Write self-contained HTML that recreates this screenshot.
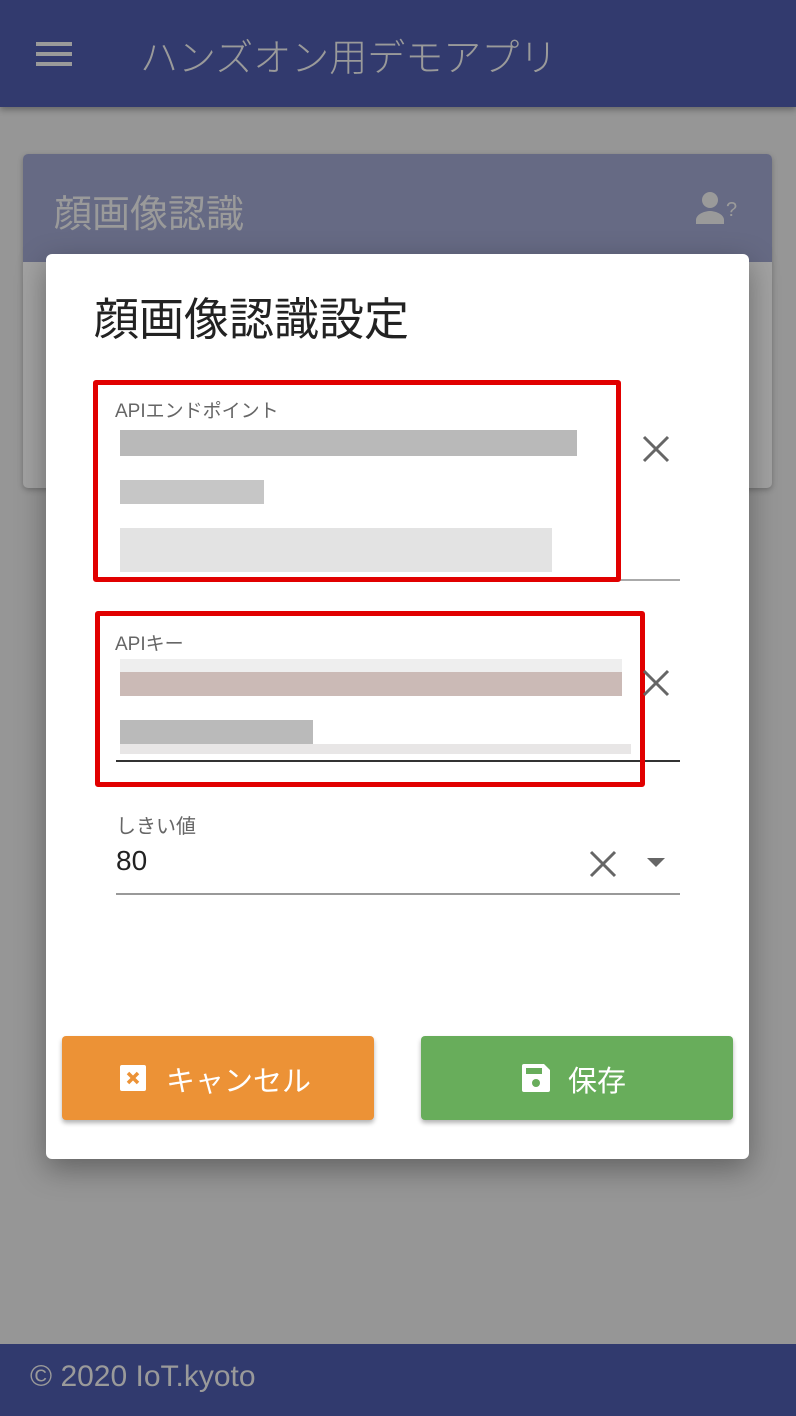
<!DOCTYPE html>
<html><head><meta charset="utf-8"><style>
*{margin:0;padding:0;box-sizing:border-box}
body{width:796px;height:1416px;position:relative;overflow:hidden;background:#969696;font-family:"Liberation Sans","Noto Sans CJK JP",sans-serif}
.a{position:absolute}
</style></head><body>
<div class="a" style="left:0;top:0;width:796px;height:107px;background:#323a6e;box-shadow:0 3px 6px rgba(0,0,0,.3)"></div>
<div class="a" style="left:36px;top:42px;width:36px;height:4px;background:#9a9a9a;box-shadow:0 10px 0 #9a9a9a,0 20px 0 #9a9a9a"></div>
<div class="a" style="left:140px;top:27px;font-size:38px;color:#9a9a9a;font-weight:300">ハンズオン用デモアプリ</div>
<div class="a" style="left:23px;top:154px;width:749px;height:334px;background:#a2a2a2;border-radius:5px;box-shadow:0 2px 6px rgba(0,0,0,.25)"></div>
<div class="a" style="left:23px;top:154px;width:749px;height:108px;background:#666a84;border-radius:5px 5px 0 0"></div>
<div class="a" style="left:54px;top:183px;font-size:38px;color:#9a9a9a">顔画像認識</div>
<svg class="a" style="left:694px;top:190px" width="48" height="36" viewBox="0 0 48 36"><circle cx="16" cy="10" r="8" fill="#9a9a9a"/><path d="M2 34v-4c0-6 9-9 14-9s14 3 14 9v4z" fill="#9a9a9a"/><text x="32" y="26" font-size="20" fill="#9a9a9a" font-family="Liberation Sans">?</text></svg>
<div class="a" style="left:46px;top:254px;width:703px;height:905px;background:#fff;border-radius:6px;box-shadow:0 10px 30px rgba(0,0,0,.35)"></div>
<div class="a" style="left:94px;top:283px;font-size:45px;color:#222">顔画像認識設定</div>
<!-- endpoint -->
<div class="a" style="left:116px;top:579px;width:564px;height:2px;background:#aaa"></div>
<div class="a" style="left:120px;top:430px;width:457px;height:26px;background:#b9b9b9"></div>
<div class="a" style="left:120px;top:480px;width:144px;height:24px;background:#c6c6c6"></div>
<div class="a" style="left:120px;top:528px;width:432px;height:44px;background:#e3e3e3"></div>
<div class="a" style="left:93px;top:380px;width:528px;height:202px;border:5px solid #e10000;border-radius:3px"></div>
<div class="a" style="left:115px;top:396px;font-size:19px;color:#666">APIエンドポイント</div>
<svg class="a" style="left:641px;top:434px" width="30" height="30" viewBox="0 0 30 30"><path d="M3 3L27 27M27 3L3 27" stroke="#666" stroke-width="3"/></svg>
<!-- key -->
<div class="a" style="left:120px;top:659px;width:502px;height:13px;background:#eeeeee"></div>
<div class="a" style="left:120px;top:672px;width:502px;height:24px;background:#cbbab6"></div>
<div class="a" style="left:120px;top:720px;width:193px;height:24px;background:#bababa"></div>
<div class="a" style="left:120px;top:744px;width:511px;height:10px;background:#e8e6e6"></div>
<div class="a" style="left:116px;top:760px;width:564px;height:2px;background:#333"></div>
<div class="a" style="left:95px;top:611px;width:550px;height:176px;border:5px solid #e10000;border-radius:3px"></div>
<div class="a" style="left:115px;top:629px;font-size:19px;color:#666">APIキー</div>
<svg class="a" style="left:641px;top:668px" width="30" height="30" viewBox="0 0 30 30"><path d="M3 3L27 27M27 3L3 27" stroke="#666" stroke-width="3"/></svg>
<!-- threshold -->
<div class="a" style="left:116px;top:810px;font-size:20px;color:#666">しきい値</div>
<div class="a" style="left:116px;top:845px;font-size:28px;color:#222">80</div>
<svg class="a" style="left:588px;top:849px" width="30" height="30" viewBox="0 0 30 30"><path d="M3 3L27 27M27 3L3 27" stroke="#666" stroke-width="3"/></svg>
<div class="a" style="left:647px;top:858px;width:0;height:0;border-left:9px solid transparent;border-right:9px solid transparent;border-top:9px solid #666"></div>
<div class="a" style="left:116px;top:893px;width:564px;height:2px;background:#999"></div>
<!-- buttons -->
<div class="a" style="left:62px;top:1036px;width:312px;height:84px;background:#ec9236;border-radius:4px;box-shadow:0 3px 5px rgba(0,0,0,.3)"></div>
<svg class="a" style="left:120px;top:1065px" width="26" height="26" viewBox="0 0 26 26"><rect width="26" height="26" rx="2" fill="#fff"/><path d="M8 8L18 18M18 8L8 18" stroke="#ec9236" stroke-width="3.5"/></svg>
<div class="a" style="left:166px;top:1058px;font-size:29px;color:#fff;letter-spacing:0px">キャンセル</div>
<div class="a" style="left:421px;top:1036px;width:312px;height:84px;background:#68ad5b;border-radius:4px;box-shadow:0 3px 5px rgba(0,0,0,.3)"></div>
<svg class="a" style="left:522px;top:1064px" width="28" height="28" viewBox="0 0 28 28"><path d="M2 0h20l6 6v20a2 2 0 0 1-2 2H2a2 2 0 0 1-2-2V2a2 2 0 0 1 2-2z" fill="#fff"/><rect x="4" y="4" width="16" height="6" fill="#68ad5b"/><circle cx="14" cy="19" r="4" fill="#68ad5b"/></svg>
<div class="a" style="left:568px;top:1058px;font-size:29px;color:#fff;letter-spacing:0px">保存</div>
<!-- footer -->
<div class="a" style="left:0;top:1344px;width:796px;height:72px;background:#313a6e"></div>
<div class="a" style="left:30px;top:1360px;font-size:30px;color:#9a9a9a">© 2020 IoT.kyoto</div>
</body></html>
